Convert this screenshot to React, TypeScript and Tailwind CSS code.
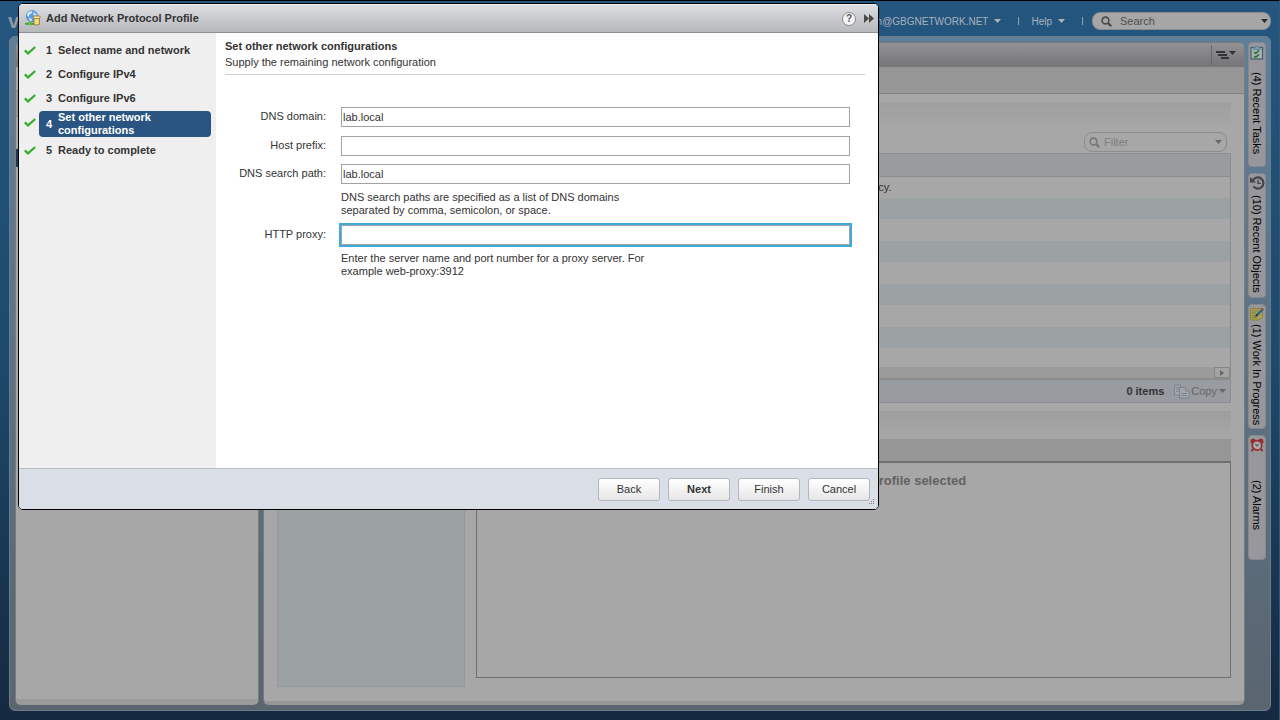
import React, { useState } from 'react';

const steps = [
    'Select name and network',
    'Configure IPv4',
    'Configure IPv6',
    'Set other network configurations',
    'Ready to complete',
];

const rows = [1, 2, 3, 4, 5, 6, 7, 8, 9];

function Caret({ className = '' }: { className?: string }) {
    return (
        <svg className={className} width="7" height="4" viewBox="0 0 7 4" fill="currentColor" aria-hidden="true">
            <path d="M0 0h7L3.5 4z" />
        </svg>
    );
}

function Magnifier({ className = '' }: { className?: string }) {
    return (
        <svg className={className} width="11" height="11" viewBox="0 0 11 11" fill="none" stroke="currentColor" aria-hidden="true">
            <circle cx="4.5" cy="4.5" r="3.4" strokeWidth="1.6" />
            <path d="M7 7l3.2 3.2" strokeWidth="2.2" />
        </svg>
    );
}

function Check() {
    return (
        <svg width="12" height="9" viewBox="0 0 12 9" fill="none" stroke="#35b02c" strokeWidth="2.2" aria-hidden="true">
            <path d="M.8 4.4l3.2 3L11.2 1" />
        </svg>
    );
}

function ProfileIcon() {
    return (
        <svg className="mb-px" width="16" height="16" viewBox="0 0 16 16" aria-hidden="true">
            <circle cx="7" cy="6.2" r="5.6" fill="#5f9fe0" stroke="#4a7fc4" strokeWidth=".8" />
            <path d="M3 2.6Q5 .6 7.6 1L6.6 3.2 4.4 4.6 3.4 7 1.8 5z" fill="#d9ecfc" />
            <path d="M8.6 2.2l3 1.8.2 3-2.2-.6-1.6-2z" fill="#c3dff8" />
            <path d="M3.6 8.2l2.8.4.4 2.2-1.6.6z" fill="#d9ecfc" />
            <path d="M5 11.5v2" stroke="#58a83c" strokeWidth="1.4" />
            <path d="M0 13.8h9" stroke="#4ba336" strokeWidth="2" />
            <rect x="3" y="12.2" width="3.6" height="3" fill="#63bb4a" />
            <path d="M9 7.6h5.4v6.8q-2.8 1.4-5.4 0z" fill="#f4dd80" stroke="#94762a" strokeWidth=".9" />
            <path d="M8.4 6h6.2q1.2 1.4 0 2.6H9.2Q7.6 8 8.4 6z" fill="#fbeeb0" stroke="#94762a" strokeWidth=".9" />
        </svg>
    );
}

function TasksIcon() {
    return (
        <svg width="14" height="15" viewBox="0 0 14 15" aria-hidden="true">
            <rect x="1" y="2.5" width="11.5" height="11.5" fill="#aab0b2" stroke="#3f5f6d" strokeWidth="1.2" />
            <path d="M3.6 4.4V2.6h1.6Q6.8-.8 8.4 2.6H10v1.8z" fill="#86a4b4" stroke="#4d7f9b" strokeWidth=".8" />
            <path d="M4 7l1.6 1.5L9 5.4M4 11l1.6 1.5L9 9.4" fill="none" stroke="#21762a" strokeWidth="1.5" />
        </svg>
    );
}

function HistoryIcon() {
    return (
        <svg width="15" height="14" viewBox="0 0 15 14" fill="none" stroke="#434343" aria-hidden="true">
            <path d="M3 4.2A5.6 5.6 0 1 1 3.4 10.4" strokeWidth="2.1" />
            <path d="M0 1v5.6h6z" fill="#434343" stroke="none" />
            <path d="M8 3.8v3.6M7.4 7.4h3.4" strokeWidth="1.3" />
        </svg>
    );
}

function WorkIcon() {
    return (
        <svg width="14" height="14" viewBox="0 0 14 14" aria-hidden="true">
            <path d="M.5 1.5h12v8.5l-3 3H.5z" fill="#aaa252" stroke="#857e3e" strokeWidth=".9" />
            <path d="M2 3.8h6M2 6h4M2 8.4h3M2 10.6h5" stroke="#7b7539" strokeWidth=".8" />
            <path d="M5.2 9.8l1-2.8 5-5 1.8 1.8-5 5z" fill="#2a6490" />
            <path d="M11 2l1.2-1.2L14 2.6l-1.2 1.2z" fill="#9c4438" />
            <path d="M5.2 9.8l1-2.8 1.8 1.8z" fill="#292929" />
        </svg>
    );
}

function AlarmIcon() {
    return (
        <svg width="14" height="14" viewBox="0 0 14 14" aria-hidden="true">
            <path d="M.6 4.8Q-.2.8 3.6.6L6 2 2 6zM13.4 4.8Q14.2.8 10.4.6L8 2l4 4z" fill="#93302e" />
            <path d="M3 11l-1.4 2.2M11 11l1.4 2.2" stroke="#802c2a" strokeWidth="1.8" />
            <circle cx="7" cy="7.4" r="4.7" fill="#aaaaac" stroke="#93302e" strokeWidth="1.7" />
            <path d="M5.4 6.2L7 7.8l1.600-1.600" fill="none" stroke="#4c4c4c" strokeWidth="1.1" />
        </svg>
    );
}

function CopyIcon() {
    return (
        <svg width="16" height="15" viewBox="0 0 16 15" fill="#a3a7ab" stroke="#75818f" strokeWidth=".9" aria-hidden="true">
            <path d="M.5 1h6v10h-6z" />
            <path d="M2 3.5h3M2 5.5h3M2 7.5h3" />
            <path d="M5.5 3.5h6l3.500 3.500v7H5.5z" />
            <path d="M11.5 3.5V7H15M7.5 9.5h5.5M7.5 11.5h5.5" />
        </svg>
    );
}

const sideTabs = [
    { label: '(4) Recent Tasks', icon: <TasksIcon /> },
    { label: '(10) Recent Objects', icon: <HistoryIcon /> },
    { label: '(1) Work In Progress', icon: <WorkIcon /> },
    { label: '(2) Alarms', icon: <AlarmIcon /> },
];

function TopBar() {
    return (
        <header className="flex h-[35px] items-center justify-between pl-2 pr-2 pt-[5px] text-[10px] text-[#a9b3bb]">
            <span className="text-xl font-bold leading-5 text-[#8d9ba7]">v</span>
            <div className="flex items-center">
                <button className="flex items-center gap-[6px]">
                    admin@GBGNETWORK.NET
                    <Caret />
                </button>
                <span className="ml-[17px] mr-3 h-2 w-px bg-[#93a1ad]" />
                <button className="flex items-center gap-[6px]">
                    Help
                    <Caret />
                </button>
                <span className="ml-[17px] mr-[9px] h-2 w-px bg-[#93a1ad]" />
                <div className="flex h-[18px] w-[179px] items-center rounded-lg border border-[#8a8a8a] bg-[#a6a6a6] pl-2 pr-[2px] text-[11px] text-[#2b2b2b]">
                    <Magnifier className="shrink-0 text-[#4a4a4a]" />
                    <input aria-label="Search" placeholder="Search" className="ml-2 min-w-0 flex-1 bg-transparent outline-none placeholder:text-[#4f4f4f]" />
                    <Caret />
                </div>
            </div>
        </header>
    );
}

function Workspace() {
    return (
        <section className="flex min-w-0 flex-1 flex-col overflow-hidden rounded-md border border-[#777b80] border-b-4 border-b-[#969696] bg-[#a7a7a7]">
            <div className="flex h-6 shrink-0 items-center justify-end border-b border-[#77777a] bg-linear-to-b from-[#929295] to-[#76767a] pr-2">
                <button aria-label="Layout" className="flex h-5 items-center border-l border-[#68686b] pl-1 text-[#333]">
                    <svg width="20" height="8" viewBox="0 0 20 8" fill="currentColor" aria-hidden="true">
                        <path d="M0 0h9v2H0zM2 3h9v2H2zM5 6h8v2H5zM13 0h7l-3.500 4z" />
                    </svg>
                </button>
            </div>
            <div className="h-[27px] shrink-0 border-b border-[#808080] bg-[#969696]" />
            <div className="flex flex-1 flex-col px-[13px] pb-[14px] pt-2">
                <div className="h-6 bg-linear-to-b from-[#9f9f9f] to-[#a6a6a6]" />
                <div className="mb-px mr-1 mt-[6px] flex h-5 w-[143px] items-center self-end rounded-lg border border-[#8c8c8e] px-1 text-[11px] text-[#666]">
                    <Magnifier className="shrink-0 text-[#777]" />
                    <input aria-label="Filter" placeholder="Filter" className="ml-1 min-w-0 flex-1 bg-transparent outline-none placeholder:text-[#7e7e7e]" />
                    <Caret />
                </div>
                <div className="border border-[#8c8d8f]">
                    <div className="h-[213px] overflow-hidden">
                        <table className="w-full border-collapse text-[11px]">
                            <thead>
                                <tr className="h-[22px] border-b border-[#8a8b8d] bg-[#999b9e]">
                                    <th aria-label="Name" />
                                </tr>
                            </thead>
                            <tbody>
                                {rows.map((row) => (
                                    <tr key={row} className="odd:h-[22px] even:h-[21px] even:bg-[#9ca1a4]">
                                        <td className="p-0 text-center text-[#333]">
                                            {row === 1 && 'Add a network protocol profile to define a network policy.'}
                                        </td>
                                    </tr>
                                ))}
                            </tbody>
                        </table>
                    </div>
                    <div className="flex h-[11px] justify-end bg-[#9b9b9b]">
                        <button aria-label="Scroll right" className="flex w-4 items-center justify-center border border-[#868686] bg-[#a4a4a4] text-[#666]">
                            <svg width="4" height="6" viewBox="0 0 4 6" fill="currentColor" aria-hidden="true">
                                <path d="M0 0l4 3-4 3z" />
                            </svg>
                        </button>
                    </div>
                    <div className="flex h-6 items-center justify-end gap-[10px] border-t-2 border-[#8b8b8d] bg-[#989b9f] pr-1 text-[11px] text-[#666]">
                        <span className="font-bold text-[#333]">0 items</span>
                        <button className="flex items-center gap-px">
                            <CopyIcon />
                            Copy
                            <Caret className="ml-px" />
                        </button>
                    </div>
                </div>
                <div className="mt-2 h-6 bg-linear-to-b from-[#9e9e9e] to-[#a6a6a6]" />
                <div className="mt-1 flex flex-1 gap-[11px]">
                    <div className="mt-6 w-[188px] border border-[#93989c] bg-[#9ca1a4]" />
                    <div className="mb-[9px] flex flex-1 flex-col">
                        <div className="h-[22px] bg-[#969696]" />
                        <div className="flex-1 border border-t-2 border-[#6f6f6f] pt-2 text-center text-[13px] font-bold text-[#626262]">
                            No network protocol profile selected
                        </div>
                    </div>
                </div>
            </div>
        </section>
    );
}

function Wizard() {
    const [domain, setDomain] = useState('lab.local');
    const [prefix, setPrefix] = useState('');
    const [searchPath, setSearchPath] = useState('lab.local');
    const [proxy, setProxy] = useState('');

    const field = 'h-5 w-full border border-[#a2a2a2] bg-white pl-px text-[11px] leading-4 text-[#333] outline-none';
    const button = 'h-[23px] w-[62px] rounded-[3px] border border-[#b3b6bb] bg-linear-to-b from-white to-[#e6e6e6] text-[11px]';

    return (
        <div role="dialog" aria-labelledby="wizard-title" className="absolute left-[18px] top-[2px] w-full max-w-[861px] overflow-hidden rounded-[5px] border border-black bg-white text-[11px] text-[#333]">
            <div className="flex h-[29px] items-center border-b border-[#8f9093] border-t border-t-[#edeef0] bg-linear-to-b from-[#dddee2] to-[#b7b8bc] pl-[6px] pr-1">
                <ProfileIcon />
                <h1 id="wizard-title" className="ml-[5px] flex-1 font-bold">Add Network Protocol Profile</h1>
                <button aria-label="Help" className="flex size-[14px] items-center justify-center rounded-full border border-[#888] bg-[#f5f5f5] text-[10px] font-bold leading-none text-[#555]">?</button>
                <button aria-label="Expand" className="ml-2 text-[#4a4a4a]">
                    <svg width="10" height="9" viewBox="0 0 10 9" fill="currentColor" aria-hidden="true">
                        <path d="M0 0l5 4.500-5 4.500zM5 0l5 4.500-5 4.500z" />
                    </svg>
                </button>
            </div>

            <div className="flex min-h-[435px]">
                <ol className="flex w-[197px] shrink-0 flex-col gap-[2px] bg-[#efefef] px-[5px] pt-[6px] font-bold leading-[13px]">
                    {steps.map((step, i) => (
                        <li key={step} className="flex items-start gap-[3px]">
                            <span className="flex h-[22px] w-3 items-center"><Check /></span>
                            <a
                                href="#"
                                className={i === 3
                                    ? 'flex min-h-[26px] flex-1 items-center rounded-[4px] bg-[#2a5482] pl-[7px] text-white'
                                    : 'flex min-h-[22px] flex-1 items-center pl-[7px]'}
                            >
                                <span className="w-3 shrink-0">{i + 1}</span>
                                <span className={i === 3 ? 'w-[110px]' : ''}>{step}</span>
                            </a>
                        </li>
                    ))}
                </ol>

                <div className="flex-1 pl-[9px] pr-[13px] pt-[5px]">
                    <div className="border-b border-[#cfcfcf] pb-1 leading-4">
                        <h2 className="font-bold">Set other network configurations</h2>
                        <p>Supply the remaining network configuration</p>
                    </div>
                    <form className="mt-8 grid grid-cols-[101px_1fr] gap-x-[15px] pr-[15px]">
                        <label htmlFor="domain" className="text-right leading-[19px]">DNS domain:</label>
                        <input id="domain" className={field} value={domain} onChange={(e) => setDomain(e.target.value)} />

                        <label htmlFor="prefix" className="mt-[9px] text-right leading-[19px]">Host prefix:</label>
                        <input id="prefix" className={`${field} mt-[9px]`} value={prefix} onChange={(e) => setPrefix(e.target.value)} />

                        <label htmlFor="search-path" className="mt-2 text-right leading-[19px]">DNS search path:</label>
                        <input id="search-path" className={`${field} mt-2`} value={searchPath} onChange={(e) => setSearchPath(e.target.value)} />
                        <p className="col-start-2 mt-[7px] leading-[13px]">
                            DNS search paths are specified as a list of DNS domains<br />separated by comma, semicolon, or space.
                        </p>

                        <label htmlFor="proxy" className="mt-2 text-right leading-[19px]">HTTP proxy:</label>
                        <input id="proxy" className={`${field} mt-2 ring-2 ring-[#41aadd]`} value={proxy} onChange={(e) => setProxy(e.target.value)} />
                        <p className="col-start-2 mt-[7px] leading-[13px]">
                            Enter the server name and port number for a proxy server. For<br />example web-proxy:3912
                        </p>
                    </form>
                </div>
            </div>

            <div className="relative flex h-[41px] items-center justify-end gap-2 border-t border-[#b9bec6] bg-[#dadee6] pr-2">
                <button className={button}>Back</button>
                <button className={`${button} font-bold`}>Next</button>
                <button className={button}>Finish</button>
                <button className={button}>Cancel</button>
                <svg className="absolute bottom-[3px] right-[3px]" width="7" height="7" viewBox="0 0 7 7" fill="#777b82" aria-hidden="true">
                    <path d="M5 0h1v1H5zM3 2h1v1H3zM5 2h1v1H5zM1 4h1v1H1zM3 4h1v1H3zM5 4h1v1H5z" />
                </svg>
            </div>
        </div>
    );
}

export default function App() {
    return (
        <div className="relative flex min-h-screen flex-col overflow-hidden border-r border-t border-r-[#315877] border-t-black bg-linear-to-b from-[#24567f] via-[#1d496d] to-[#15293f] pb-[9px] font-['Liberation_Sans',Arial,sans-serif]">
            <TopBar />
            <main className="ml-[9px] mr-2 flex flex-1 gap-1 rounded-md border border-[#6b7c89] bg-linear-to-b from-[#5f7f98] to-[#5a6570] py-[5px] pl-[5px] pr-1">
                <aside className="w-[244px] shrink-0 overflow-hidden rounded-md border border-[#777b80] border-b-[6px] border-b-[#9b9b9b] bg-[#a7a7a7]">
                    <div className="h-6 border-b border-[#77777a] bg-linear-to-b from-[#929295] to-[#76767a]" />
                    <div className="h-6 border-b border-[#888]" />
                    <div className="h-[26px] border-b border-[#888] bg-[#969696]" />
                    <div className="mt-8 h-[18px] bg-[#1c3756]" />
                </aside>
                <Workspace />
                <nav className="ml-[-1px] flex w-[18px] shrink-0 flex-col gap-[6px]">
                    {sideTabs.map((tab) => (
                        <button key={tab.label} className="flex h-[125px] w-full flex-col items-center rounded-[4px] border border-[#85898f] bg-[#97979c] pt-[2px] text-black">
                            {tab.icon}
                            <span className="flex flex-1 items-center whitespace-nowrap text-[11px] leading-4 [writing-mode:vertical-rl]">
                                <span className="m-auto">{tab.label}</span>
                            </span>
                        </button>
                    ))}
                </nav>
            </main>
            <Wizard />
        </div>
    );
}
